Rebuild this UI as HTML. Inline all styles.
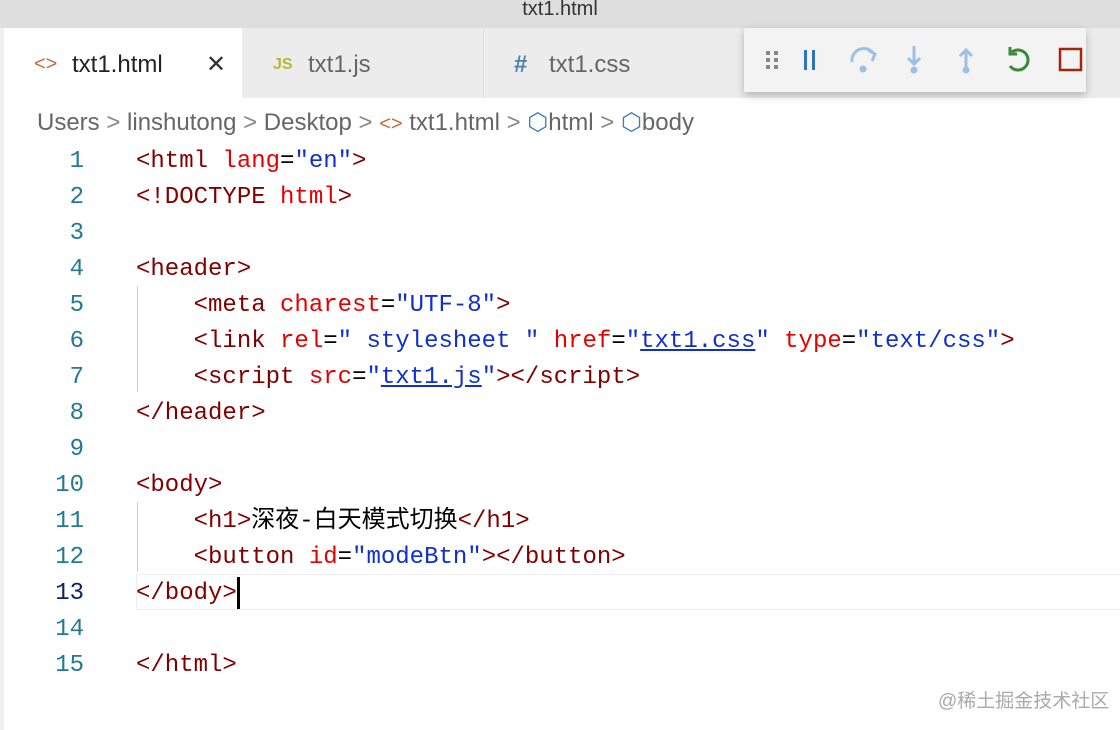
<!DOCTYPE html>
<html><head><meta charset="utf-8"><style>
body{margin:0;width:1120px;height:730px;overflow:hidden;background:#fff;font-family:"Liberation Sans","Noto Sans CJK SC",sans-serif;position:relative}
.title{position:absolute;left:0;top:0;width:1120px;height:28px;background:#dedede;text-align:center;font-size:20px;line-height:18px;color:#333}
.tabs{position:absolute;left:0;top:28px;width:1120px;height:70px;background:#ececec}
.tab{position:absolute;top:0;height:70px;line-height:74px;font-size:24px;color:#666}
.strip{position:absolute;left:0;top:28px;width:4px;height:702px;background:#f0f0f0}
.bc{position:absolute;left:37px;top:106px;font-size:24px;color:#666;white-space:nowrap;line-height:34px}
.code{position:absolute;left:0;top:144px;font-family:"Liberation Mono","Noto Sans CJK SC",monospace;font-size:24px}
.l{height:36px;line-height:36px;position:relative;white-space:pre}
.n{position:absolute;left:0;width:84px;text-align:right;color:#237893}
.c{position:absolute;left:136px;color:#000}
.t{color:#800000}.a{color:#e50000}.v{color:#0f2fd0}.u{text-decoration:underline}
.guide{position:absolute;left:137px;width:1px;background:#ccc}
.dbg{position:absolute;left:744px;top:28px;width:342px;height:64px;background:#f3f3f3;box-shadow:0 3px 8px rgba(0,0,0,.25)}
</style></head><body>
<div class="title">txt1.html</div>
<div class="tabs">
<div class="tab" style="left:4px;width:238px;background:#fff;color:#222"><span style="color:#c5693a;position:absolute;left:30px;font-size:20px;top:-1px">&lt;&gt;</span><span style="position:absolute;left:68px">txt1.html</span><span style="position:absolute;left:202px;color:#333">✕</span></div>
<div class="tab" style="left:243px;width:238px"><span style="color:#b7b73b;position:absolute;left:30px;font-size:16px;font-weight:bold">JS</span><span style="position:absolute;left:65px">txt1.js</span></div>
<div class="tab" style="left:483px;width:238px;border-left:1px solid #e2e2e2"><span style="color:#4f82a8;position:absolute;left:30px;font-weight:bold">#</span><span style="position:absolute;left:65px">txt1.css</span></div>
</div>
<div class="dbg">
<svg width="342" height="64" viewBox="0 0 342 64">
<g fill="#888"><rect x="22" y="23" width="4" height="4"/><rect x="30" y="23" width="4" height="4"/><rect x="22" y="30" width="4" height="4"/><rect x="30" y="30" width="4" height="4"/><rect x="22" y="37" width="4" height="4"/><rect x="30" y="37" width="4" height="4"/></g>
<g fill="#2c73c4"><rect x="60" y="22" width="3" height="20"/><rect x="68" y="22" width="3" height="20"/></g>
<g stroke="#9cc0e2" stroke-width="3" fill="none"><path d="M108 34 A12 12 0 0 1 130 26"/><path d="M124 22 L131 26 L128 33"/><path d="M170 18 V36 M164 30 L170 36 L176 30"/><path d="M222 40 V22 M216 28 L222 22 L228 28"/></g>
<g fill="#9cc0e2"><circle cx="119" cy="41" r="3.5"/><circle cx="170" cy="42" r="3.5"/><circle cx="222" cy="42" r="3.5"/></g>
<g stroke="#388a34" stroke-width="3" fill="none"><path d="M268 24 A10 10 0 1 1 266 38"/><path d="M266 19 V26 H273"/></g>
<rect x="316" y="21" width="21" height="21" stroke="#a1260d" stroke-width="2.5" fill="none"/>
</svg></div>
<div class="bc">Users <span style="color:#888">&gt;</span> linshutong <span style="color:#888">&gt;</span> Desktop <span style="color:#888">&gt;</span> <span style="color:#c5693a;font-size:20px">&lt;&gt;</span> txt1.html <span style="color:#888">&gt;</span> <span style="color:#3a7dc4">⬡</span>html <span style="color:#888">&gt;</span> <span style="color:#3a7dc4">⬡</span>body</div>
<div class="strip"></div>
<div style="position:absolute;left:136px;top:574px;width:984px;height:34px;border:1px solid #eee;border-right:none"></div>
<div class="guide" style="top:286px;height:106px"></div>
<div class="guide" style="top:502px;height:70px"></div>
<div class="code">
<div class="l"><span class="n">1</span><span class="c"><span class="t">&lt;html</span> <span class="a">lang</span>=<span class="v">"en"</span><span class="t">&gt;</span></span></div>
<div class="l"><span class="n">2</span><span class="c"><span class="t">&lt;!DOCTYPE</span> <span class="a">html</span><span class="t">&gt;</span></span></div>
<div class="l"><span class="n">3</span></div>
<div class="l"><span class="n">4</span><span class="c"><span class="t">&lt;header&gt;</span></span></div>
<div class="l"><span class="n">5</span><span class="c">    <span class="t">&lt;meta</span> <span class="a">charest</span>=<span class="v">"UTF-8"</span><span class="t">&gt;</span></span></div>
<div class="l"><span class="n">6</span><span class="c">    <span class="t">&lt;link</span> <span class="a">rel</span>=<span class="v">" stylesheet "</span> <span class="a">href</span>=<span class="v">"<span class="u">txt1.css</span>"</span> <span class="a">type</span>=<span class="v">"text/css"</span><span class="t">&gt;</span></span></div>
<div class="l"><span class="n">7</span><span class="c">    <span class="t">&lt;script</span> <span class="a">src</span>=<span class="v">"<span class="u">txt1.js</span>"</span><span class="t">&gt;&lt;/script&gt;</span></span></div>
<div class="l"><span class="n">8</span><span class="c"><span class="t">&lt;/header&gt;</span></span></div>
<div class="l"><span class="n">9</span></div>
<div class="l"><span class="n">10</span><span class="c"><span class="t">&lt;body&gt;</span></span></div>
<div class="l"><span class="n">11</span><span class="c">    <span class="t">&lt;h1&gt;</span>深夜-白天模式切换<span class="t">&lt;/h1&gt;</span></span></div>
<div class="l"><span class="n">12</span><span class="c">    <span class="t">&lt;button</span> <span class="a">id</span>=<span class="v">"modeBtn"</span><span class="t">&gt;&lt;/button&gt;</span></span></div>
<div class="l"><span class="n" style="color:#0b216f">13</span><span class="c"><span class="t">&lt;/body&gt;</span><span style="display:inline-block;width:3px;height:32px;background:#000;vertical-align:middle"></span></span></div>
<div class="l"><span class="n">14</span></div>
<div class="l"><span class="n">15</span><span class="c"><span class="t">&lt;/html&gt;</span></span></div>
</div>
<div style="position:absolute;left:938px;top:686px;font-size:19px;color:#aaa">@稀土掘金技术社区</div>
</body></html>
